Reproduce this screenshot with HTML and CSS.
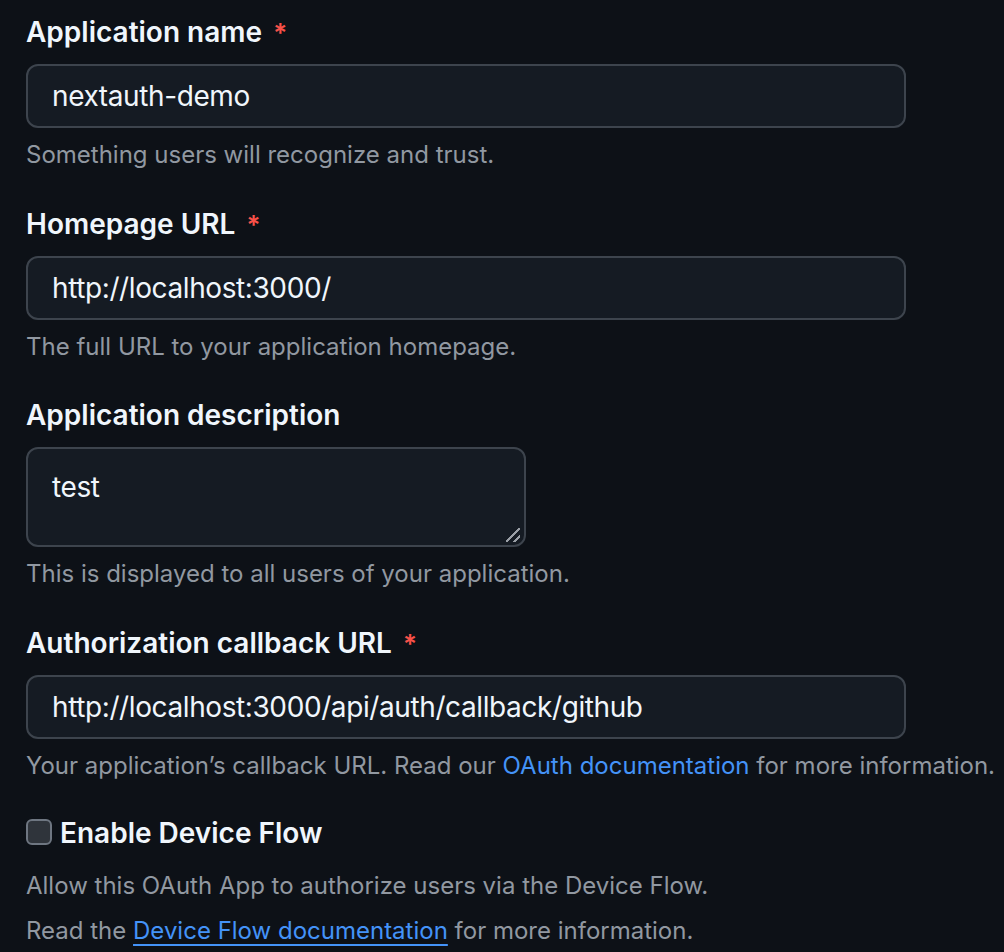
FILE: index.html
```html
<!DOCTYPE html>
<html lang="en">
<head>
<meta charset="utf-8">
<title>Register a new OAuth app</title>
<link rel="stylesheet" href="styles.css">
</head>
<body>
<form class="form">
  <div class="group">
    <label class="label">Application name <span class="req">*</span></label>
    <div class="field">nextauth-demo</div>
    <p class="hint">Something users will recognize and trust.</p>
  </div>
  <div class="group">
    <label class="label">Homepage URL <span class="req">*</span></label>
    <div class="field">http://localhost:3000/</div>
    <p class="hint">The full URL to your application homepage.</p>
  </div>
  <div class="group">
    <label class="label">Application description</label>
    <div class="textarea">test<span class="grip"></span></div>
    <p class="hint">This is displayed to all users of your application.</p>
  </div>
  <div class="group group-last">
    <label class="label">Authorization callback URL <span class="req">*</span></label>
    <div class="field">http://localhost:3000/api/auth/callback/github</div>
    <p class="hint">Your application’s callback URL. Read our <a class="link" href="#">OAuth documentation</a> for more information.</p>
  </div>
  <div class="check-row">
    <span class="checkbox"></span>
    <span class="check-label">Enable Device Flow</span>
  </div>
  <p class="note note-first">Allow this OAuth App to authorize users via the Device Flow.</p>
  <p class="note">Read the <a class="link link-under" href="#">Device Flow documentation</a> for more information.</p>
</form>
</body>
</html>
```
FILE: styles.css
```css
html, body {
  margin: 0;
  padding: 0;
  background: #0d1117;
}
body {
  font-family: Inter, "Noto Sans", "Liberation Sans", sans-serif;
  color: #f0f6fc;
}
.form {
  padding: 12px 0 0 26px;
}
.group {
  margin-bottom: 30.7px;
}
.group-last {
  margin-bottom: 29px;
}
.label {
  display: block;
  height: 40px;
  font-size: 28px;
  line-height: 40px;
  font-weight: 600;
  margin-bottom: 12px;
  color: #f0f6fc;
}
.req {
  color: #f85149;
  font-size: 26px;
  line-height: 0;
  margin-left: 4px;
}
.field {
  box-sizing: border-box;
  width: 880px;
  height: 64px;
  border: 2px solid #3d444d;
  border-radius: 12px;
  background: #151b23;
  padding: 0 24px;
  display: flex;
  align-items: center;
  font-size: 28px;
  letter-spacing: -0.4px;
  color: #f0f6fc;
}
.textarea {
  position: relative;
  box-sizing: border-box;
  width: 500px;
  height: 100px;
  border: 2px solid #3d444d;
  border-radius: 12px;
  background: #151b23;
  padding: 18px 24px 14px;
  font-size: 28px;
  line-height: 40px;
  letter-spacing: -0.4px;
  color: #f0f6fc;
}
.grip {
  position: absolute;
  right: 4px;
  bottom: 3px;
  width: 14px;
  height: 14px;
  background:
    linear-gradient(135deg, transparent 46%, #9a9fa6 46%, #9a9fa6 56%, transparent 56%),
    linear-gradient(135deg, transparent 74%, #9a9fa6 74%, #9a9fa6 84%, transparent 84%);
}
.hint {
  margin: 9px 0 0;
  font-size: 24px;
  line-height: 36px;
  color: #9198a1;
}
.link {
  color: #4493f8;
  text-decoration: none;
}
.link-under {
  text-decoration: underline;
  text-decoration-thickness: 2px;
  text-underline-offset: 5px;
}
.check-row {
  display: flex;
  align-items: center;
  gap: 8px;
  height: 40px;
}
.checkbox {
  box-sizing: border-box;
  width: 26px;
  height: 26px;
  border: 2px solid #6e7681;
  border-radius: 6px;
  background: #2f343b;
  margin-top: -2px;
}
.check-label {
  font-size: 28px;
  line-height: 40px;
  font-weight: 600;
}
.note {
  margin: 9px 0 0;
  font-size: 24px;
  line-height: 36px;
  color: #9198a1;
}
.note-first {
  margin-top: 15px;
}
```
